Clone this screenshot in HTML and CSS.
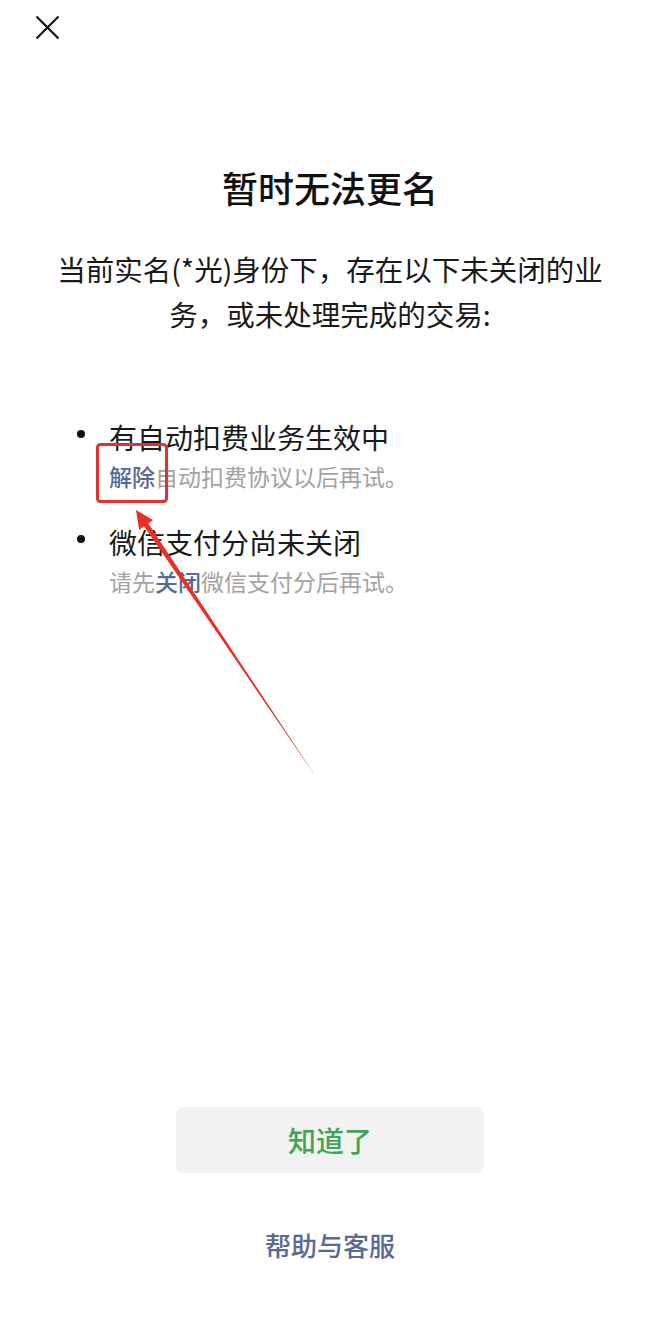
FILE: index.html
```html
<!DOCTYPE html>
<html lang="zh-CN">
<head>
<meta charset="utf-8">
<title>暂时无法更名</title>
<link rel="stylesheet" href="styles.css">
</head>
<body>
<div class="page">
  <header class="topbar">
    <button class="close" aria-label="关闭">
      <svg width="25" height="25" viewBox="0 0 25 25"><path d="M1.5 1.5 L23.5 23.5 M23.5 1.5 L1.5 23.5" stroke="#111" stroke-width="2.2" fill="none"/></svg>
    </button>
  </header>
  <main class="content">
    <h1 class="title">暂时无法更名</h1>
    <p class="desc">当前实名(*光)身份下，存在以下未关闭的业务，或未处理完成的交易:</p>
    <ul class="items">
      <li class="item">
        <span class="dot"></span>
        <div class="item-body">
          <div class="item-title">有自动扣费业务生效中</div>
          <div class="item-sub"><a class="link">解除</a>自动扣费协议以后再试。</div>
        </div>
      </li>
      <li class="item">
        <span class="dot"></span>
        <div class="item-body">
          <div class="item-title">微信支付分尚未关闭</div>
          <div class="item-sub">请先<a class="link">关闭</a>微信支付分后再试。</div>
        </div>
      </li>
    </ul>
  </main>
  <footer class="footer">
    <button class="btn">知道了</button>
    <a class="help">帮助与客服</a>
  </footer>
  <svg class="annot" viewBox="0 0 660 1332" width="660" height="1332">
    <rect x="97.5" y="444.5" width="69" height="57" rx="3" ry="3" fill="none" stroke="#e8302a" stroke-width="3"/>
    <polygon points="136,510 153,520 148.4,523.4 316,777 144,526.3 139.2,530" fill="#ea2f26"/>
  </svg>
</div>
</body>
</html>
```
FILE: styles.css
```css
html, body {
  margin: 0;
  padding: 0;
  background: #ffffff;
}
body {
  font-family: "Noto Sans CJK SC", "Noto Sans", sans-serif;
  color: #1a1a1a;
}
.page {
  position: relative;
  width: 660px;
  min-height: 1332px;
  display: flex;
  flex-direction: column;
  box-sizing: border-box;
}
.topbar {
  padding: 15px 0 0 35px;
  height: 25px;
}
.close {
  display: block;
  width: 25px;
  height: 25px;
  padding: 0;
  border: 0;
  background: none;
}
.close svg { display: block; }
.content {
  display: flex;
  flex-direction: column;
}
.title {
  margin: 122px 0 0;
  font-size: 36px;
  line-height: 50px;
  font-weight: 500;
  text-align: center;
  color: #111111;
}
.desc {
  margin: 34px auto 0;
  width: 560px;
  font-size: 28.5px;
  line-height: 45px;
  text-align: center;
  color: #1a1a1a;
}
.items {
  list-style: none;
  margin: 81px 0 0;
  padding: 0 0 0 77px;
  display: flex;
  flex-direction: column;
  gap: 29px;
}
.item {
  display: flex;
  align-items: flex-start;
  gap: 24px;
}
.dot {
  flex: none;
  width: 8px;
  height: 8px;
  border-radius: 50%;
  background: #111111;
  margin-top: 13px;
}
.item-body {
  display: flex;
  flex-direction: column;
  gap: 2px;
}
.item-title {
  font-size: 28px;
  line-height: 40px;
  color: #1a1a1a;
}
.item-sub {
  font-size: 23px;
  line-height: 34px;
  color: #a3a3a3;
}
.link {
  color: #576b95;
  font-weight: 500;
}
.footer {
  margin-top: auto;
  display: flex;
  flex-direction: column;
  align-items: center;
  padding-bottom: 69px;
}
.btn {
  width: 308px;
  height: 66px;
  border: 0;
  border-radius: 7px;
  background: #f2f2f2;
  color: #3ea655;
  font-family: inherit;
  font-size: 28px;
  font-weight: 500;
  padding: 0;
}
.help {
  margin-top: 54px;
  font-size: 26px;
  line-height: 36px;
  font-weight: 500;
  color: #576b95;
}
.annot {
  position: absolute;
  left: 0;
  top: 0;
  pointer-events: none;
}
```
